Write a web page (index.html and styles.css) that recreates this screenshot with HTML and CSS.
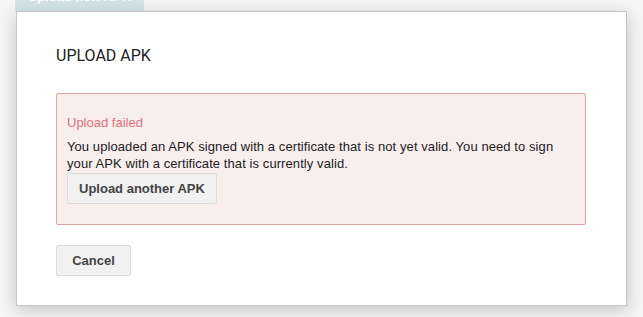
FILE: index.html
```html
<!DOCTYPE html>
<html>
<head>
<meta charset="utf-8">
<link rel="stylesheet" href="styles.css">
</head>
<body>
<div class="page">
  <div class="toolbar">
    <button class="primary-btn">Upload new APK</button>
  </div>
</div>
<div class="dialog">
  <h2 class="dialog-title">UPLOAD APK</h2>
  <div class="error-box">
    <div class="error-title">Upload failed</div>
    <p class="error-text">You uploaded an APK signed with a certificate that is not yet valid. You need to sign your APK with a certificate that is currently valid.</p>
    <button class="btn">Upload another APK</button>
  </div>
  <div class="actions">
    <button class="btn btn-cancel">Cancel</button>
  </div>
</div>
</body>
</html>
```
FILE: styles.css
```css
html, body {
  margin: 0;
  padding: 0;
}
body {
  background: #f5f5f5;
  width: 643px;
  height: 317px;
  overflow: hidden;
  position: relative;
  font-family: "Liberation Sans", Arial, sans-serif;
  font-size: 13px;
  color: #222;
}
.toolbar {
  display: flex;
  padding-left: 15px;
  margin-top: -19px;
}
.primary-btn {
  width: 129px;
  height: 30px;
  border: none;
  background: #d3e5e8;
  color: #fff;
  font-family: "Liberation Sans", Arial, sans-serif;
  font-weight: bold;
  font-size: 13px;
  padding: 0;
}
.dialog {
  position: absolute;
  left: 16px;
  top: 11px;
  width: 611px;
  height: 295px;
  box-sizing: border-box;
  background: #fff;
  border: 1px solid #c4c4c4;
  box-shadow: 0 4px 16px rgba(0, 0, 0, 0.2);
  padding: 35px 40px 0 39px;
}
.dialog-title {
  margin: 0;
  font-family: Roboto, "Liberation Sans", sans-serif;
  font-weight: 400;
  font-size: 16px;
  line-height: 18px;
  color: #222;
}
.error-box {
  margin-top: 28px;
  border: 1px solid #e3a1a1;
  border-radius: 2px;
  background: #f9eeee;
  padding: 21px 10px 20px 10px;
}
.error-title {
  color: #d9727a;
  line-height: 16px;
}
.error-text {
  margin: 7px 0 0 0;
  line-height: 17px;
  letter-spacing: 0.08px;
  color: #222;
}
.btn {
  height: 31px;
  box-sizing: border-box;
  border: 1px solid #dcdcdc;
  border-radius: 2px;
  background: #f1f1f1;
  color: #444;
  font-family: "Liberation Sans", Arial, sans-serif;
  font-weight: bold;
  font-size: 13px;
  padding: 0 11px;
  margin-top: 1px;
}
.actions {
  display: flex;
  margin-top: 20px;
}
.btn-cancel {
  width: 75px;
  margin-top: 0;
  padding: 0;
}
```
